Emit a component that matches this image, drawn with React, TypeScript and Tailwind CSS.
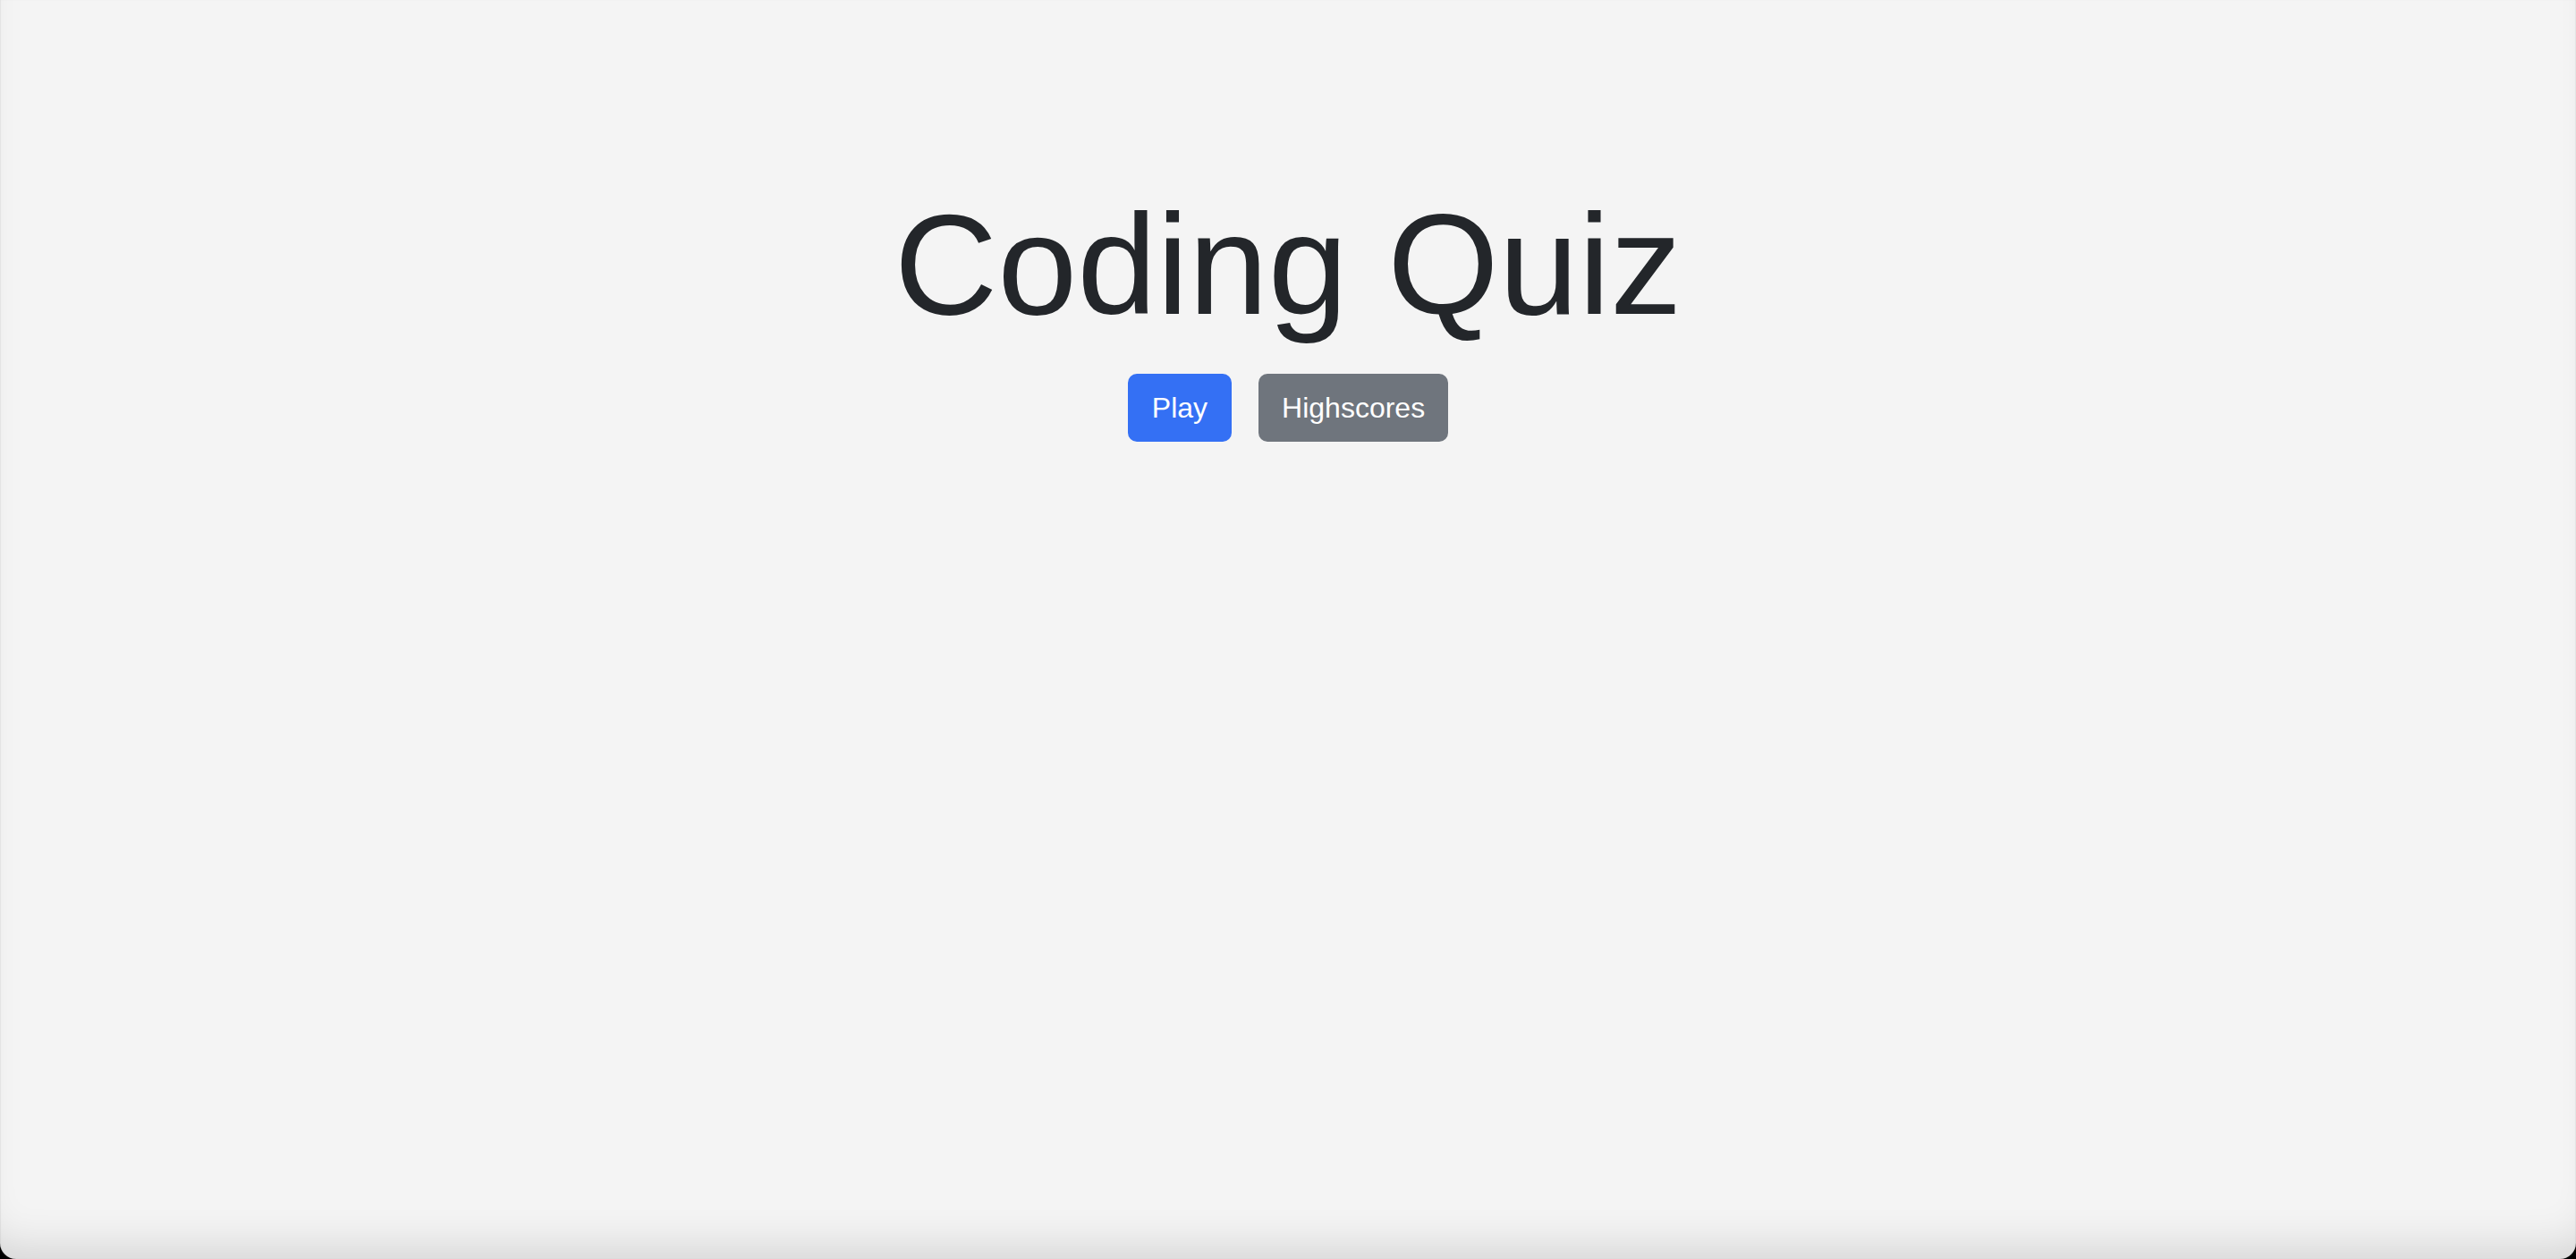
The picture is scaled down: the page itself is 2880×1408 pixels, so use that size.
export default function App() {
  return (
    <div className="h-[1408px] w-full bg-black">
      <div
        className="flex h-full flex-col items-center overflow-hidden rounded-b-[18px] bg-[#f4f4f4] shadow-[inset_0_-40px_50px_-30px_rgba(0,0,0,0.14),inset_1px_0_1px_rgba(0,0,0,0.06),inset_-1px_0_1px_rgba(0,0,0,0.06)]"
        style={{ fontFamily: '"Liberation Sans", Arial, sans-serif' }}
      >
        <h1 className="mt-[200px] text-[160px] font-normal leading-[192px] text-[#23262a]">
          Coding Quiz
        </h1>
        <div className="mt-[26px] flex gap-[30px]">
          <button className="h-[76px] rounded-[10px] bg-[#3470f4] px-[27px] text-[32px] leading-[48px] text-white">
            Play
          </button>
          <button className="h-[76px] rounded-[10px] bg-[#6f757d] px-[26px] text-[32px] leading-[48px] text-white">
            Highscores
          </button>
        </div>
      </div>
    </div>
  )
}
